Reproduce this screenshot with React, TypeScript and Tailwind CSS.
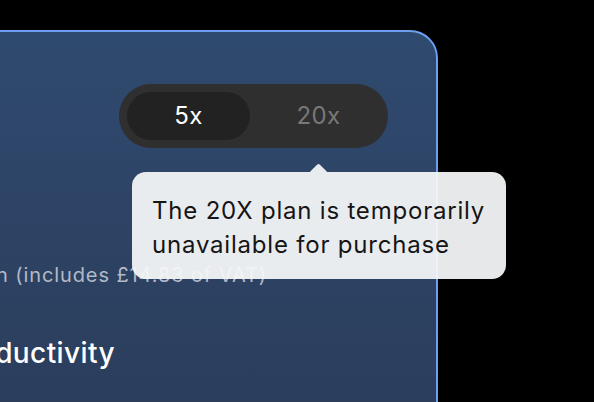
export default function App() {
  return (
    <div
      className="w-[594px] h-[402px] overflow-hidden bg-black"
      style={{ fontFamily: "Inter, 'Noto Sans', sans-serif" }}
    >
      {/* Plan card, left part cut off by the window */}
      <div className="ml-[-40px] mt-[30px] w-[478px] h-[420px] rounded-[28px] border-2 border-[#6d9ef0] bg-gradient-to-b from-[#2f4a6f] to-[#2b3c5a] pt-[52px] pr-[48px] flex flex-col">
        <div className="self-end relative">
          <div className="flex items-center w-[269px] h-[64px] rounded-full bg-[#2f2f2f] p-2">
            <button className="w-[123px] h-[48px] rounded-full bg-[#222222] text-white text-[24px] tracking-[0.3px]">
              5x
            </button>
            <button className="flex-1 h-[48px] pl-[7px] text-[#787878] text-[24px] tracking-[0.3px]">
              20x
            </button>
          </div>

          {/* Tooltip */}
          <div className="absolute left-[13px] top-[88px] w-[374px] h-[107px] z-10">
            <div className="absolute left-[177px] top-[-9px] w-[18px] h-[9px] overflow-hidden">
              <div className="mt-[3px] mx-auto w-[13px] h-[13px] rotate-45 bg-[#f5f6f8]/[0.94] rounded-[2px]" />
            </div>
            <div className="relative h-full rounded-[14px] bg-[#f5f6f8]/[0.94] px-[20px] pt-[22px] text-[24px] tracking-[0.8px] leading-[34px] text-[#151515]">
              The 20X plan is temporarily
              <br />
              unavailable for purchase
            </div>
          </div>
        </div>

        <div className="mt-[115px] w-[305px] flex justify-end whitespace-nowrap text-[20px] tracking-[0.9px] leading-[24px] text-[#b2b9c6]">
          <span>£89 per month (includes £14.83 of VAT)</span>
        </div>

        <div className="mt-[49px] w-[153px] flex justify-end whitespace-nowrap text-[28px] tracking-[0.4px] leading-[34px] font-medium text-white">
          <span>More productivity</span>
        </div>
      </div>
    </div>
  );
}
